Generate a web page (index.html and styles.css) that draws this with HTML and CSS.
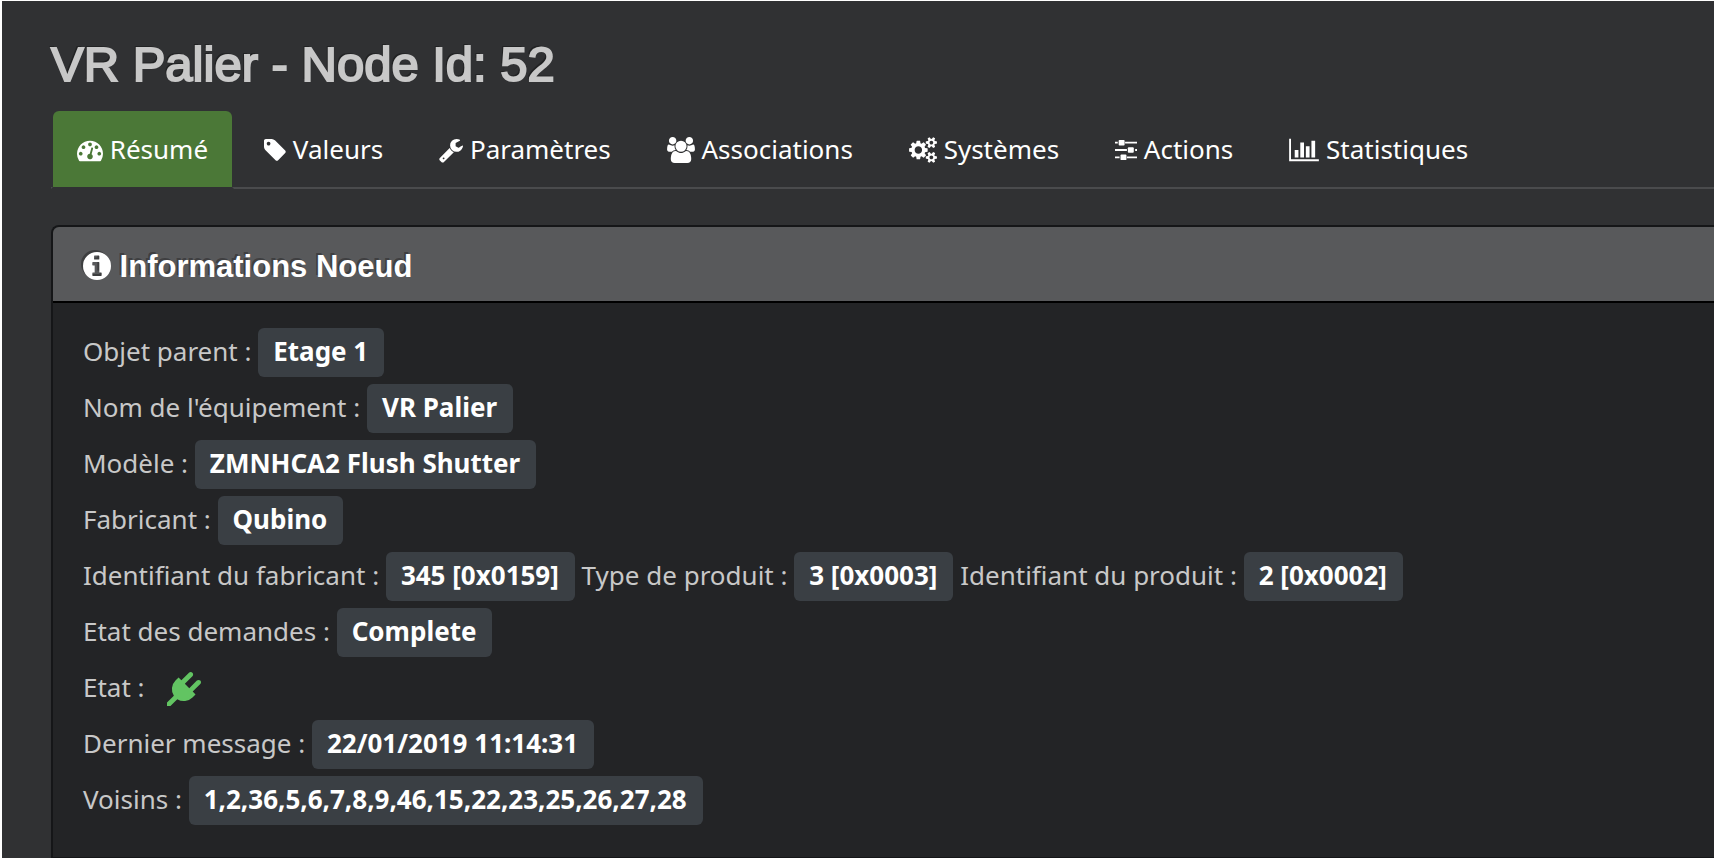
FILE: index.html
```html
<!DOCTYPE html>
<html lang="fr">
<head>
<meta charset="utf-8">
<title>VR Palier - Node Id: 52</title>
<link rel="stylesheet" href="styles.css">
</head>
<body>
<main class="page">
  <h1 class="title">VR Palier - Node Id: 52</h1>
  <nav class="tabs">
    <a class="tab tab-active" href="#resume"><svg class="icon w26" viewBox="0 0 1792 1792"><path d="M384 1152q0-53-37.500-90.500t-90.500-37.500-90.500 37.500-37.500 90.500 37.500 90.500 90.500 37.500 90.500-37.500 37.500-90.500zm192-448q0-53-37.500-90.500t-90.500-37.500-90.500 37.500-37.500 90.500 37.500 90.500 90.500 37.500 90.500-37.500 37.500-90.500zm428 481l101-382q6-26-7.500-48.500t-38.500-29.500-48 6.500-30 39.500l-101 382q-60 5-107 43.500t-63 98.500q-20 77 20 146t117 89 146-20 89-117q16-60-6-117t-72-91zm660-33q0-53-37.500-90.500t-90.500-37.500-90.500 37.500-37.500 90.500 37.500 90.500 90.500 37.500 90.500-37.500 37.500-90.500zm-640-640q0-53-37.500-90.500t-90.500-37.500-90.500 37.500-37.500 90.500 37.500 90.500 90.500 37.500 90.500-37.500 37.500-90.500zm448 192q0-53-37.500-90.500t-90.500-37.500-90.500 37.500-37.500 90.500 37.500 90.500 90.500 37.500 90.500-37.500 37.500-90.500zm320 448q0 261-141 483-19 29-54 29h-1402q-35 0-54-29-141-221-141-483 0-182 71-348t191-286 286-191 348-71 348 71 286 191 191 286 71 348z"/></svg> Résumé</a>
    <a class="tab" href="#valeurs"><svg class="icon w22" viewBox="128 0 1536 1792"><path d="M576 448q0-53-37.500-90.500t-90.500-37.500-90.500 37.500-37.500 90.500 37.500 90.500 90.500 37.500 90.500-37.500 37.500-90.500zm1067 576q0 53-37 90l-491 492q-39 37-91 37-53 0-90-37l-715-716q-38-37-64.500-101t-26.500-117v-416q0-52 38-90t90-38h416q53 0 117 26.500t102 64.500l715 714q37 39 37 91z"/></svg> Valeurs</a>
    <a class="tab" href="#parametres"><svg class="icon w24" viewBox="64 0 1664 1792"><path d="M448 1472q0-26-19-45t-45-19-45 19-19 45 19 45 45 19 45-19 19-45zm644-420l-682 682q-37 37-90 37-52 0-91-37l-106-108q-38-36-38-90 0-53 38-91l681-681q39 98 114.500 173.500t173.500 114.500zm634-435q0 39-23 106-47 134-164.500 217.500t-258.500 83.500q-185 0-316.500-131.500t-131.500-316.500 131.500-316.500 316.500-131.500q58 0 121.500 16.500t107.500 46.500q16 11 16 28t-16 28l-293 169v224l193 107q5-3 79-48.500t135.500-81 70.500-35.500q15 0 23.500 10t8.500 25z"/></svg> Paramètres</a>
    <a class="tab" href="#associations"><svg class="icon w28" viewBox="0 0 1920 1792"><path d="M593 896q-162 5-265 128h-134q-82 0-138-40.500t-56-118.500q0-353 124-353 6 0 43.500 21t97.500 42.500 119 21.500q67 0 133-23-5 37-5 66 0 139 81 256zm1071 637q0 120-73 189.500t-194 69.500h-874q-121 0-194-69.500t-73-189.500q0-53 3.500-103.500t14-109 26.500-108.500 43-97.500 62-81 85.500-53.500 111.500-20q10 0 43 21.500t73 48 107 48 135 21.500 135-21.500 107-48 73-48 43-21.500q61 0 111.500 20t85.500 53.500 62 81 43 97.500 26.500 108.500 14 109 3.500 103.500zm-1024-1277q0 106-75 181t-181 75-181-75-75-181 75-181 181-75 181 75 75 181zm704 384q0 159-112.500 271.500t-271.500 112.500-271.500-112.500-112.500-271.500 112.500-271.500 271.500-112.500 271.500 112.500 112.500 271.500zm576 225q0 78-56 118.500t-138 40.500h-134q-103-123-265-128 81-117 81-256 0-29-5-66 66 23 133 23 59 0 119-21.500t97.500-42.500 43.500-21q124 0 124 353zm-128-609q0 106-75 181t-181 75-181-75-75-181 75-181 181-75 181 75 75 181z"/></svg> Associations</a>
    <a class="tab" href="#systemes"><svg class="icon w28" viewBox="0 0 1920 1792"><path d="M896 896q0-106-75-181t-181-75-181 75-75 181 75 181 181 75 181-75 75-181zm768 512q0-52-38-90t-90-38-90 38-38 90q0 53 37.500 90.500t90.500 37.500 90.500-37.500 37.500-90.500zm0-1024q0-52-38-90t-90-38-90 38-38 90q0 53 37.500 90.500t90.500 37.500 90.500-37.500 37.500-90.500zm-384 421v185q0 10-7 19.500t-16 10.500l-155 24q-11 35-32 76 34 48 90 115 7 11 7 20 0 12-7 19-23 30-82.500 89.500t-78.500 59.500q-11 0-21-7l-115-90q-37 19-77 31-11 108-23 155-7 24-30 24h-186q-11 0-20-7.500t-10-17.500l-23-153q-34-10-75-31l-118 89q-7 7-20 7-11 0-21-8-144-133-144-160 0-9 7-19 10-14 41-53t47-61q-23-44-35-82l-152-24q-10-1-17-9.500t-7-19.500v-185q0-10 7-19.500t16-10.500l155-24q11-35 32-76-34-48-90-115-7-11-7-20 0-12 7-20 22-30 82-89t79-59q11 0 21 7l115 90q34-18 77-32 11-108 23-154 7-24 30-24h186q11 0 20 7.500t10 17.500l23 153q34 10 75 31l118-89q8-7 20-7 11 0 21 8 144 133 144 160 0 8-7 19-12 16-42 54t-45 60q23 48 34 82l152 23q10 2 17 10.500t7 19.500zm640 533v140q0 16-149 31-12 27-30 52 51 113 51 138 0 4-4 7-122 71-124 71-8 0-46-47t-52-68q-20 2-30 2t-30-2q-14 21-52 68t-46 47q-2 0-124-71-4-3-4-7 0-25 51-138-18-25-30-52-149-15-149-31v-140q0-16 149-31 13-29 30-52-51-113-51-138 0-4 4-7 4-2 35-20t59-34 30-16q8 0 46 46.500t52 67.500q20-2 30-2t30 2q51-71 92-112l6-2q4 0 124 70 4 3 4 7 0 25-51 138 17 23 30 52 149 15 149 31zm0-1024v140q0 16-149 31-12 27-30 52 51 113 51 138 0 4-4 7-122 71-124 71-8 0-46-47t-52-68q-20 2-30 2t-30-2q-14 21-52 68t-46 47q-2 0-124-71-4-3-4-7 0-25 51-138-18-25-30-52-149-15-149-31v-140q0-16 149-31 13-29 30-52-51-113-51-138 0-4 4-7 4-2 35-20t59-34 30-16q8 0 46 46.500t52 67.500q20-2 30-2t30 2q51-71 92-112l6-2q4 0 124 70 4 3 4 7 0 25-51 138 17 23 30 52 149 15 149 31z"/></svg> Systèmes</a>
    <a class="tab" href="#actions"><svg class="icon w22" viewBox="0 0 1536 1792"><path d="M0 320h192v128H0zM704 320h832v128H704zM0 832h832v128H0zM1408 832h128v128h-128zM0 1344h320v128H0zM832 1344h704v128H832z"/><rect x="256" y="192" width="416" height="384" rx="64"/><rect x="896" y="704" width="416" height="384" rx="64"/><rect x="384" y="1216" width="416" height="384" rx="64"/></svg> Actions</a>
    <a class="tab" href="#statistiques"><svg class="icon w30" viewBox="0 0 2048 1792"><path d="M640 896v512H384V896zM1024 384v1024H768V384zM2048 1536v128H0V128h128v1408zM1408 640v768h-256V640zM1792 256v1152h-256V256z"/></svg> Statistiques</a>
  </nav>
  <section class="panel">
    <h2 class="panel-head"><svg class="info" viewBox="0 0 1536 1536"><path fill-rule="evenodd" d="M768 0a768 768 0 1 1 0 1536a768 768 0 1 1 0-1536zM640 192q-32 0-32 32v160q0 32 32 32h224q32 0 32-32V224q0-32-32-32zM544 544q-32 0-32 32v128q0 32 32 32h96v384h-96q-32 0-32 32v128q0 32 32 32h448q32 0 32-32v-128q0-32-32-32h-96V576q0-32-32-32z"/></svg> Informations Noeud</h2>
    <div class="panel-body">
      <p class="row">Objet parent : <span class="label">Etage 1</span></p>
      <p class="row">Nom de l'équipement : <span class="label">VR Palier</span></p>
      <p class="row">Modèle : <span class="label">ZMNHCA2 Flush Shutter</span></p>
      <p class="row">Fabricant : <span class="label">Qubino</span></p>
      <p class="row">Identifiant du fabricant : <span class="label">345 [0x0159]</span> Type de produit : <span class="label">3 [0x0003]</span> Identifiant du produit : <span class="label">2 [0x0002]</span></p>
      <p class="row">Etat des demandes : <span class="label">Complete</span></p>
      <p class="row">Etat : <svg class="plug" viewBox="0 0 1792 1792"><path d="M1755 453q37 38 37 90.500t-37 90.500l-401 400 150 150-160 160q-163 163-389.500 186.500t-411.500-100.500l-362 362h-181v-181l362-362q-124-185-100.500-411.500t186.500-389.500l160-160 150 150 400-401q38-37 91-37t90 37 37 90.500-37 90.500l-400 401 234 234 401-400q38-37 91-37t90 37z"/></svg></p>
      <p class="row">Dernier message : <span class="label">22/01/2019 11:14:31</span></p>
      <p class="row">Voisins : <span class="label">1,2,36,5,6,7,8,9,46,15,22,23,25,26,27,28</span></p>
    </div>
  </section>
</main>
</body>
</html>
```
FILE: styles.css
```css
* { box-sizing: border-box; }

body {
  margin: 0;
  padding: 1px 0 0 2px;
  background: #fff;
  color: #c8c8c8;
  font: 26px/36px "Noto Sans", sans-serif;
  overflow: hidden;
}

.page {
  min-height: calc(100vh - 1px);
  padding: 37px 0 0 49px;
  background: #303133;
}

.title {
  margin: 0 0 19px;
  font: 49px/52px "Liberation Sans", Arial, sans-serif;
  -webkit-text-stroke: 2px currentColor;
  text-shadow: -2px -2px 0 rgba(0, 0, 0, 0.3);
}

.tabs {
  display: flex;
  gap: 4px;
  border-bottom: 2px solid #4a4b4d;
}

.tab {
  margin-bottom: -2px;
  padding: 20px 24px;
  border: 2px solid transparent;
  border-radius: 8px 8px 0 0;
  color: #fff;
  text-decoration: none;
  white-space: nowrap;
}

.tab-active {
  background: #4b7837 padding-box;
  border-bottom-color: #303133;
}

.icon {
  height: 26px;
  vertical-align: -4px;
  fill: currentColor;
}

.w22 { width: 22px; }
.w24 { width: 24px; }
.w26 { width: 26px; }
.w28 { width: 28px; }
.w30 { width: 30px; }

.panel {
  margin-top: 36px;
  border: 2px solid #151618;
  border-right: 0;
  border-radius: 8px 0 0 0;
  background: #232426;
  overflow: hidden;
}

.panel-head {
  margin: 0;
  padding: 22px 30px 16px;
  border-bottom: 2px solid #000;
  background: #58595b;
  color: #fff;
  font: bold 31px/36px "Liberation Sans", Arial, sans-serif;
  text-shadow: -2px -2px 0 rgba(0, 0, 0, 0.3);
}

.info {
  width: 28px;
  height: 28px;
  vertical-align: -3px;
  fill: currentColor;
  filter: drop-shadow(-2px -2px 0 rgba(0, 0, 0, 0.3));
}

.panel-body { padding: 20px 30px 30px; }

.row {
  margin: 0;
  line-height: 56px;
}

.label {
  padding: 5px 16px 8px 15px;
  border-radius: 6px;
  background: #3a3f44;
  color: #fff;
  font-weight: bold;
}

.plug {
  width: 34px;
  height: 34px;
  margin-left: 16px;
  vertical-align: -9px;
  fill: #62c462;
}
```
